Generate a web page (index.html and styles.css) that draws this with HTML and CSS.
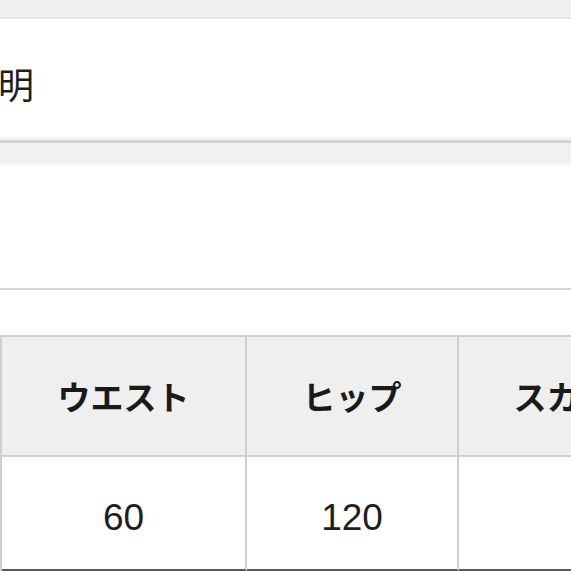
FILE: index.html
```html
<!DOCTYPE html>
<html lang="ja">
<head>
<meta charset="utf-8">
<link rel="stylesheet" href="styles.css">
</head>
<body>
<div class="page">
  <div class="band-top"></div>
  <section class="title-sec">
    <h2 class="title">明</h2>
  </section>
  <div class="gap"></div>
  <section class="blank"></section>
  <section class="table-sec">
    <table class="size-table">
      <tr class="head-row">
        <th class="c1">ウエスト</th>
        <th class="c2">ヒップ</th>
        <th class="c3">スカート丈</th>
      </tr>
      <tr class="body-row">
        <td class="c1">60</td>
        <td class="c2">120</td>
        <td class="c3"></td>
      </tr>
    </table>
  </section>
</div>
</body>
</html>
```

FILE: styles.css
```css
html, body {
  margin: 0;
  padding: 0;
  background: #ffffff;
  overflow: hidden;
}
.page {
  width: 571px;
  height: 571px;
  overflow: hidden;
  font-family: "Noto Sans CJK JP", sans-serif;
  color: #222222;
}
.band-top {
  height: 17px;
  background: #efefef;
  border-bottom: 2px solid #e6e6e6;
}
.title-sec {
  height: 118px;
  background: #ffffff;
  border-bottom: 3px solid #f4f4f4;
  display: flex;
  align-items: center;
}
.title {
  margin: 0 0 0 -2px;
  font-size: 36px;
  font-weight: 400;
  line-height: 36px;
  padding-top: 10px;
  color: #1e1e1e;
}
.gap {
  height: 20px;
  background: #f1f1f1;
  border-top: 3px solid #d2d2d2;
  border-bottom: 2px solid #f7f7f7;
}
.blank {
  height: 123px;
  border-bottom: 2px solid #d6d6d6;
}
.table-sec {
  padding-top: 45px;
}
.size-table {
  border-collapse: separate;
  border-spacing: 0;
  table-layout: fixed;
  width: 735px;
  border-top: 2px solid #cfcfcf;
  border-left: 2px solid #cfcfcf;
}
.size-table th,
.size-table td {
  box-sizing: border-box;
  padding: 0;
  text-align: center;
  border-right: 2px solid #cfcfcf;
  border-bottom: 2px solid #cfcfcf;
}
.size-table .c1 { width: 245px; }
.size-table .c2 { width: 212px; }
.size-table .c3 { width: 276px; }
.head-row th {
  height: 120px;
  background: #efefef;
  font-size: 33px;
  font-weight: 700;
  color: #1a1a1a;
}
.body-row td {
  height: 114px;
  background: #ffffff;
  font-family: "Liberation Sans", "Noto Sans CJK JP", sans-serif;
  font-size: 37px;
  font-weight: 400;
  color: #1e1e1e;
  padding-top: 10px;
  border-bottom-color: #5a5a5a;
}
```
